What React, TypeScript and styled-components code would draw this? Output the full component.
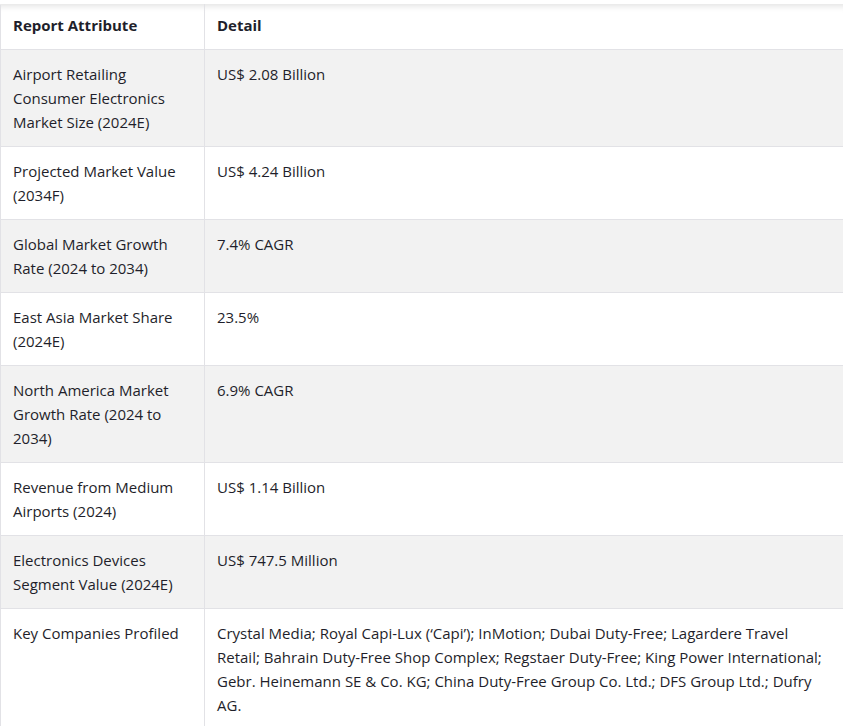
import React from "react";
import styled, { createGlobalStyle } from "styled-components";

const Global = createGlobalStyle`
  html, body { margin: 0; padding: 0; background: #ffffff; }
  body { font-family: "Open Sans", "Noto Sans", sans-serif; color: #1f1f2b; }
`;

const Page = styled.div`
  padding-top: 4px;
  width: 843px;
  overflow: hidden;
`;

const Table = styled.table`
  border-collapse: collapse;
  width: 843px;
  table-layout: fixed;
  font-size: 15px;
  line-height: 24px;
`;

const HeadCell = styled.th`
  text-align: left;
  font-weight: 700;
  padding: 8px 12px 12px 12px;
  border: 1px solid #e2e2e6;
  border-top: 1px solid #ebebeb;
  box-shadow: inset 0 7px 6px -6px rgba(0, 0, 0, 0.12);
  background: #ffffff;
  &:last-child { border-right: none; }
`;

const Row = styled.tr<{ $shade: boolean }>`
  background: ${(p) => (p.$shade ? "#f2f2f2" : "#ffffff")};
`;

const Cell = styled.td`
  vertical-align: top;
  padding: 12px;
  border: 1px solid #e2e2e6;
  &:last-child { border-right: none; }
`;

const rows: [string, string][] = [
  ["Airport Retailing Consumer Electronics Market Size (2024E)", "US$ 2.08 Billion"],
  ["Projected Market Value (2034F)", "US$ 4.24 Billion"],
  ["Global Market Growth Rate (2024 to 2034)", "7.4% CAGR"],
  ["East Asia Market Share (2024E)", "23.5%"],
  ["North America Market Growth Rate (2024 to 2034)", "6.9% CAGR"],
  ["Revenue from Medium Airports (2024)", "US$ 1.14 Billion"],
  ["Electronics Devices Segment Value (2024E)", "US$ 747.5 Million"],
  [
    "Key Companies Profiled",
    "Crystal Media; Royal Capi-Lux (‘Capi’); InMotion; Dubai Duty-Free; Lagardere Travel Retail; Bahrain Duty-Free Shop Complex; Regstaer Duty-Free; King Power International; Gebr. Heinemann SE & Co. KG; China Duty-Free Group Co. Ltd.; DFS Group Ltd.; Dufry AG.",
  ],
];

export default function App() {
  return (
    <>
      <Global />
      <Page>
        <Table>
          <colgroup>
            <col style={{ width: 204 }} />
            <col />
          </colgroup>
          <thead>
            <tr>
              <HeadCell>Report Attribute</HeadCell>
              <HeadCell>Detail</HeadCell>
            </tr>
          </thead>
          <tbody>
            {rows.map(([a, b], i) => (
              <Row key={i} $shade={i % 2 === 0}>
                <Cell>{a}</Cell>
                <Cell>{b}</Cell>
              </Row>
            ))}
          </tbody>
        </Table>
      </Page>
    </>
  );
}
